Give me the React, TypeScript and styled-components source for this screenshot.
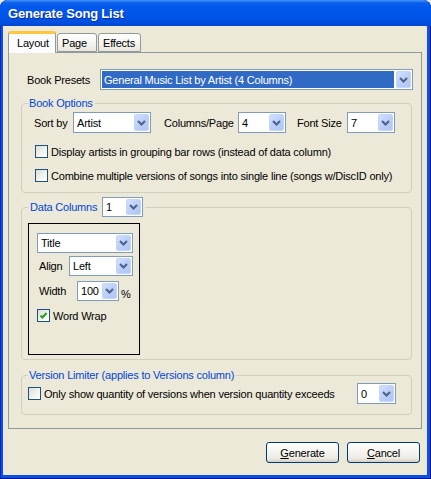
import React from "react";
import styled, { createGlobalStyle } from "styled-components";

const GlobalStyle = createGlobalStyle`
  html, body {
    margin: 0;
    padding: 0;
    background: #ece9d8;
  }
  body {
    font-family: "Liberation Sans", Arial, sans-serif;
    font-size: 11px;
    letter-spacing: -0.2px;
    color: #000;
  }
`;

const Window = styled.div`
  width: 431px;
  height: 479px;
  box-sizing: border-box;
  display: flex;
  flex-direction: column;
  background: #0b4fe4;
  border-radius: 8px 8px 0 0;
  overflow: hidden;
  box-shadow: inset 0 -1px 0 #00138c, inset 1px 0 0 #0029c4, inset -1px 0 0 #00138c;
`;

const TitleBar = styled.div`
  height: 26px;
  flex-shrink: 0;
  display: flex;
  align-items: center;
  padding-left: 8px;
  padding-top: 1px;
  box-sizing: border-box;
  background: linear-gradient(
    180deg,
    #4394fb 0px,
    #0a5eeb 3px,
    #0058ec 8px,
    #0055e9 16px,
    #0150e0 22px,
    #0046ce 26px
  );
  color: #fff;
  font-weight: bold;
  font-size: 13px;
  letter-spacing: -0.2px;
  text-shadow: 1px 1px 0 #0b2e9c;
`;

const Client = styled.div`
  flex: 1;
  display: flex;
  flex-direction: column;
  margin: 0 4px 4px 3px;
  padding: 5px 5px 0 5px;
  background: #ece9d8;
`;

const TabStrip = styled.div`
  display: flex;
  align-items: flex-end;
  height: 22px;
  margin-bottom: -1px;
  position: relative;
  z-index: 1;
`;

const Tab = styled.div<{ $active?: boolean; $w: number }>`
  width: ${(p) => p.$w}px;
  height: ${(p) => (p.$active ? 22 : 19)}px;
  margin-bottom: ${(p) => (p.$active ? 0 : 1)}px;
  box-sizing: border-box;
  display: flex;
  align-items: center;
  padding-left: ${(p) => (p.$active ? 8 : 4)}px;
  padding-bottom: ${(p) => (p.$active ? 2 : 0)}px;
  border: 1px solid #919b9c;
  border-bottom: ${(p) => (p.$active ? "none" : "1px solid #919b9c")};
  border-top: ${(p) => (p.$active ? "3px solid #ffc73c" : "1px solid #919b9c")};
  border-radius: 3px 3px 0 0;
  background: ${(p) =>
    p.$active ? "#fcfcfe" : "linear-gradient(180deg, #ffffff 0%, #f4f3ee 60%, #e8e6dc 100%)"};
  & + & {
    margin-left: ${(p) => (p.$active ? 0 : 1)}px;
  }
`;

const TabPanel = styled.div`
  height: 377px;
  box-sizing: border-box;
  border: 1px solid #919b9c;
  background: #ece9d8;
  display: flex;
  flex-direction: column;
`;

const PresetRow = styled.div`
  display: flex;
  align-items: center;
  margin: 16px 0 0 18px;
`;

const Label = styled.span<{ $w?: number; $ml?: number }>`
  ${(p) => (p.$w ? `width: ${p.$w}px; flex-shrink: 0;` : "")}
  margin-left: ${(p) => p.$ml ?? 0}px;
  white-space: nowrap;
`;

const Group = styled.fieldset<{ $mt: number; $pt: number; $pb: number }>`
  margin: ${(p) => p.$mt}px 9px 0 12px;
  padding: ${(p) => p.$pt}px 6px ${(p) => p.$pb}px 6px;
  border: 1px solid #d0d0bf;
  border-radius: 4px;
  min-width: 0;
`;

const Legend = styled.legend`
  padding: 0 2px 0 1px;
  color: #0046d5;
  line-height: 13px;
  display: flex;
  align-items: center;
`;

const Row = styled.div<{ $mt?: number; $ml?: number; $mr?: number }>`
  display: flex;
  align-items: center;
  margin-top: ${(p) => p.$mt ?? 0}px;
  margin-left: ${(p) => p.$ml ?? 0}px;
  margin-right: ${(p) => p.$mr ?? 0}px;
`;

const SpreadRow = styled(Row)`
  justify-content: space-between;
`;

const ComboBox = styled.div<{ $w: number; $h: number }>`
  width: ${(p) => p.$w}px;
  height: ${(p) => p.$h}px;
  flex-shrink: 0;
  box-sizing: border-box;
  display: flex;
  border: 1px solid #7f9db9;
  background: #fff;
`;

const ComboValue = styled.div<{ $highlight?: boolean }>`
  flex: 1;
  min-width: 0;
  display: flex;
  align-items: center;
  margin: 1px;
  padding-left: 2px;
  white-space: nowrap;
  overflow: hidden;
  background: ${(p) => (p.$highlight ? "#316ac5" : "transparent")};
  color: ${(p) => (p.$highlight ? "#fff" : "#000")};
`;

const DropButton = styled.div`
  width: 15px;
  margin: 1px;
  box-sizing: border-box;
  flex-shrink: 0;
  display: flex;
  align-items: center;
  justify-content: center;
  border: 1px solid #c4d5fb;
  border-radius: 2px;
  background: linear-gradient(135deg, #d5e1fe 0%, #bccff9 50%, #b0c5f5 100%);
`;

const Chevron = () => (
  <svg width="9" height="6" viewBox="0 0 9 6">
    <path d="M1 1 L4.5 4.5 L8 1" fill="none" stroke="#4d6185" strokeWidth="2" />
  </svg>
);

type ComboProps = { value: string; width: number; height?: number; highlight?: boolean };

const Combo = ({ value, width, height = 20, highlight }: ComboProps) => (
  <ComboBox $w={width} $h={height}>
    <ComboValue $highlight={highlight}>{value}</ComboValue>
    <DropButton>
      <Chevron />
    </DropButton>
  </ComboBox>
);

const CheckBox = styled.span`
  width: 13px;
  height: 13px;
  box-sizing: border-box;
  flex-shrink: 0;
  display: inline-flex;
  align-items: center;
  justify-content: center;
  border: 1px solid #1c5180;
  background: linear-gradient(135deg, #dcdcd7 0%, #f4f4f0 60%, #ffffff 100%);
  margin-right: 3px;
`;

const Check = ({ checked }: { checked?: boolean }) => (
  <CheckBox>
    {checked && (
      <svg width="9" height="9" viewBox="0 0 9 9">
        <path d="M1.5 4.5 L3.5 6.5 L7.5 2" fill="none" stroke="#21a121" strokeWidth="2" />
      </svg>
    )}
  </CheckBox>
);

const ColumnBox = styled.div`
  width: 112px;
  height: 132px;
  box-sizing: border-box;
  border: 1px solid #000;
  padding: 9px 0 0 8px;
  display: flex;
  flex-direction: column;
`;

const Percent = styled.span`
  margin-left: 2px;
  align-self: flex-end;
  margin-bottom: 1px;
`;

const ButtonRow = styled.div`
  display: flex;
  justify-content: flex-end;
  gap: 8px;
  margin-top: 13px;
  padding-right: 2px;
`;

const PushButton = styled.div`
  width: 73px;
  height: 21px;
  box-sizing: border-box;
  display: flex;
  align-items: center;
  justify-content: center;
  border: 1px solid #003c74;
  border-radius: 3px;
  background: linear-gradient(180deg, #ffffff 0%, #f5f4f0 45%, #ecebe6 80%, #d6d0c5 100%);
`;

export default function App() {
  return (
    <>
      <GlobalStyle />
      <Window>
        <TitleBar>Generate Song List</TitleBar>
        <Client>
          <TabStrip>
            <Tab $active $w={48}>Layout</Tab>
            <Tab $w={40}>Page</Tab>
            <Tab $w={43}>Effects</Tab>
          </TabStrip>
          <TabPanel>
            <PresetRow>
              <Label $w={73}>Book Presets</Label>
              <Combo value="General Music List by Artist (4 Columns)" width={313} height={21} highlight />
            </PresetRow>

            <Group $mt={7} $pt={2} $pb={10}>
              <Legend>Book Options</Legend>
              <Row $ml={6}>
                <Label $w={39}>Sort by</Label>
                <Combo value="Artist" width={78} height={21} />
                <Label $w={74} $ml={13}>Columns/Page</Label>
                <Combo value="4" width={48} height={21} />
                <Label $w={50} $ml={11}>Font Size</Label>
                <Combo value="7" width={48} height={21} />
              </Row>
              <Row $mt={12} $ml={7}>
                <Check />
                <Label>Display artists in grouping bar rows (instead of data column)</Label>
              </Row>
              <Row $mt={11} $ml={7}>
                <Check />
                <Label>Combine multiple versions of songs into single line (songs w/DiscID only)</Label>
              </Row>
            </Group>

            <Group $mt={4} $pt={6} $pb={4}>
              <Legend>
                <Label $w={72} $ml={1}>Data Columns</Label>
                <Combo value="1" width={41} />
              </Legend>
              <ColumnBox>
                <Combo value="Title" width={96} />
                <Row $mt={3} $ml={2}>
                  <Label $w={30}>Align</Label>
                  <Combo value="Left" width={64} />
                </Row>
                <Row $mt={5} $ml={2}>
                  <Label $w={38}>Width</Label>
                  <Combo value="100" width={42} />
                  <Percent>%</Percent>
                </Row>
                <Row $mt={8}>
                  <Check checked />
                  <Label>Word Wrap</Label>
                </Row>
              </ColumnBox>
            </Group>

            <Group $mt={9} $pt={1} $pb={10}>
              <Legend>Version Limiter (applies to Versions column)</Legend>
              <SpreadRow $mr={9}>
                <Row>
                  <Check />
                  <Label>Only show quantity of versions when version quantity exceeds</Label>
                </Row>
                <Combo value="0" width={39} height={21} />
              </SpreadRow>
            </Group>
          </TabPanel>
          <ButtonRow>
            <PushButton>
              <u>G</u>enerate
            </PushButton>
            <PushButton>
              <u>C</u>ancel
            </PushButton>
          </ButtonRow>
        </Client>
      </Window>
    </>
  );
}
